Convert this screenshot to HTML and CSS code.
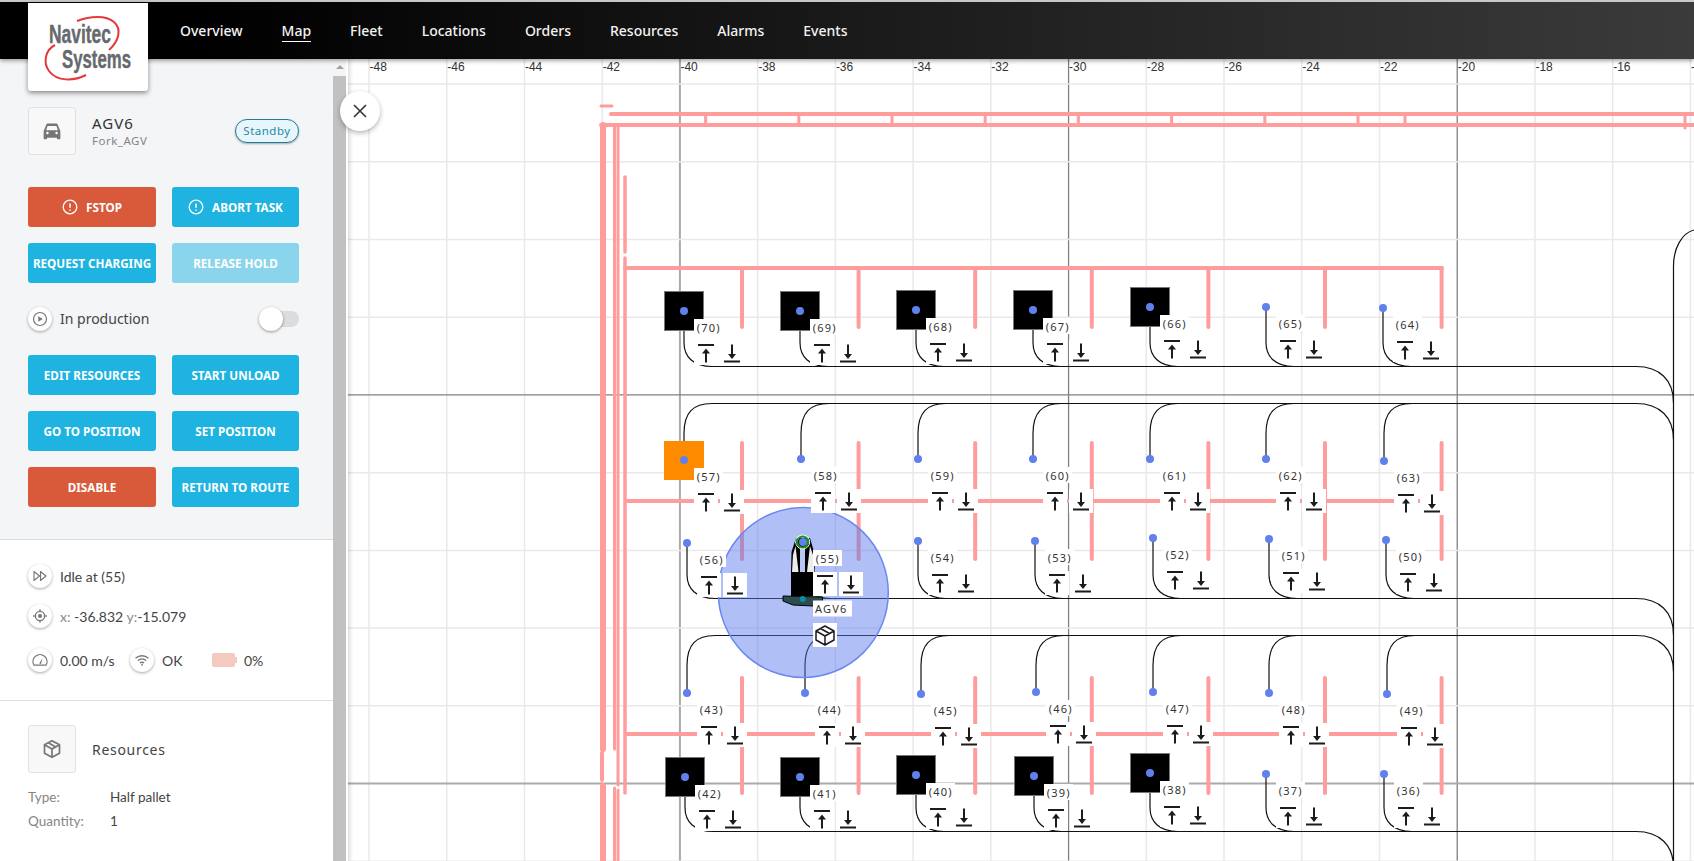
FILE: index.html
```html
<!DOCTYPE html>
<html lang="en">
<head>
  <meta charset="UTF-8" />
  <meta name="viewport" content="width=device-width, initial-scale=1.0" />
  <title>Navitec Systems - Map</title>
  <link rel="stylesheet" href="styles.css">
</head>
<body>
  <header class="topbar">
    <div class="logo">
      <svg width="120" height="88" viewBox="0 0 120 88">
        <path class="logo-swoosh" d="M49 18 C62 13 78 12 86 19 C94 26 91 38 81 47" />
        <path class="logo-swoosh" d="M27 42 C17 47 15 60 21 68 C29 79 46 78 58 72" />
        <text class="logo-text" x="21" y="40" textLength="62" lengthAdjust="spacingAndGlyphs">Navitec</text>
        <text class="logo-text" x="34" y="65" textLength="69" lengthAdjust="spacingAndGlyphs">Systems</text>
      </svg>
    </div>
    <nav class="nav">
      <a>Overview</a>
      <a class="active">Map</a>
      <a>Fleet</a>
      <a>Locations</a>
      <a>Orders</a>
      <a>Resources</a>
      <a>Alarms</a>
      <a>Events</a>
    </nav>
  </header>

  <div class="content">
    <aside class="sidebar">
      <div class="side-body">
        <section class="vehicle">
          <div class="vehicle-head">
            <div class="icon-box">
              <svg width="20" height="20" viewBox="0 0 24 24"><path fill="#757575" fill-rule="evenodd" d="M18.9 4.5C18.6 3.6 17.8 3 16.9 3H7.1c-.9 0-1.7.6-2 1.5L2 12v9c0 .6.4 1 1 1h2c.6 0 1-.4 1-1v-1h12v1c0 .6.4 1 1 1h2c.6 0 1-.4 1-1v-9l-3.100-7.500zM6.500 16c-.8 0-1.500-.7-1.500-1.500S5.700 13 6.500 13s1.500.7 1.500 1.500S7.300 16 6.500 16zm11 0c-.8 0-1.500-.7-1.500-1.500s.7-1.500 1.500-1.500 1.500.7 1.500 1.500-.7 1.500-1.500 1.500zM5 11l1.700-5h10.600l1.700 5H5z"/></svg>
            </div>
            <div class="vehicle-name">
              <div class="name">AGV6</div>
              <div class="type">Fork_AGV</div>
            </div>
            <span class="pill">Standby</span>
          </div>

          <div class="btn-grid">
            <button class="btn red">
              <svg width="16" height="16" viewBox="0 0 16 16"><circle cx="8" cy="8" r="6.800" fill="none" stroke="#fff" stroke-width="1.300"/><path d="M8 4.500v4.300M8 10.500v1.300" stroke="#fff" stroke-width="1.500" fill="none"/></svg>
              FSTOP
            </button>
            <button class="btn">
              <svg width="16" height="16" viewBox="0 0 16 16"><circle cx="8" cy="8" r="6.800" fill="none" stroke="#fff" stroke-width="1.300"/><path d="M8 4.500v4.300M8 10.500v1.300" stroke="#fff" stroke-width="1.500" fill="none"/></svg>
              ABORT TASK
            </button>
            <button class="btn">REQUEST CHARGING</button>
            <button class="btn faded">RELEASE HOLD</button>
          </div>

          <div class="toggle-row">
            <span class="round-icon">
              <svg width="16" height="16" viewBox="0 0 16 16"><circle cx="8" cy="8" r="6.500" fill="none" stroke="#757575" stroke-width="1.200"/><path d="M6.300 5.200l4.500 2.800-4.500 2.800z" fill="#757575"/></svg>
            </span>
            <span class="toggle-label">In production</span>
            <span class="toggle"><span class="thumb"></span></span>
          </div>

          <div class="btn-grid">
            <button class="btn">EDIT RESOURCES</button>
            <button class="btn">START UNLOAD</button>
            <button class="btn">GO TO POSITION</button>
            <button class="btn">SET POSITION</button>
            <button class="btn red">DISABLE</button>
            <button class="btn">RETURN TO ROUTE</button>
          </div>
        </section>

        <section class="status">
          <div class="status-row">
            <span class="round-icon">
              <svg width="16" height="16" viewBox="0 0 16 16"><path d="M2 3.500l5.500 4.500L2 12.500zM8.500 3.500l5.500 4.500-5.500 4.500z" fill="none" stroke="#757575" stroke-width="1.100" stroke-linejoin="round"/></svg>
            </span>
            <span>Idle at (55)</span>
          </div>
          <div class="status-row">
            <span class="round-icon">
              <svg width="16" height="16" viewBox="0 0 16 16"><circle cx="8" cy="8" r="4.600" fill="none" stroke="#757575" stroke-width="1.300"/><circle cx="8" cy="8" r="2" fill="#757575"/><path d="M8 1.200v2.200M8 12.600v2.200M1.200 8h2.200M12.600 8h2.200" stroke="#757575" stroke-width="1.300"/></svg>
            </span>
            <span><span class="muted">x:</span> -36.832 <span class="muted">y:</span>-15.079</span>
          </div>
          <div class="status-row speed-row">
            <span class="round-icon">
              <svg width="16" height="16" viewBox="0 0 16 16"><path d="M2 13.200h12a7 7 0 1 0-12 0z" fill="none" stroke="#757575" stroke-width="1.200" stroke-linejoin="round"/><path d="M7.200 11.500l3.300-5.200-1.500 5.800z" fill="#757575"/></svg>
            </span>
            <span class="speed">0.00 m/s</span>
            <span class="round-icon">
              <svg width="16" height="16" viewBox="0 0 16 16"><path d="M1.500 6.200c3.800-3.300 9.200-3.300 13 0M3.800 8.600c2.500-2.100 5.900-2.100 8.400 0M6 11c1.200-.9 2.800-.9 4 0" fill="none" stroke="#757575" stroke-width="1.300"/><circle cx="8" cy="12.800" r=".9" fill="#757575"/></svg>
            </span>
            <span class="link-ok">OK</span>
            <span class="battery"></span>
            <span>0%</span>
          </div>
        </section>

        <section class="resources">
          <div class="resources-head">
            <div class="icon-box">
              <svg width="20" height="20" viewBox="0 0 24 24"><path d="M12 2l9 5v10l-9 5-9-5V7zM3 7l9 5 9-5M12 12v10M7.500 4.500l9 5" fill="none" stroke="#757575" stroke-width="2" stroke-linejoin="round"/></svg>
            </div>
            <span class="resources-title">Resources</span>
          </div>
          <div class="res-row"><span class="res-key">Type:</span><span>Half pallet</span></div>
          <div class="res-row"><span class="res-key">Quantity:</span><span>1</span></div>
        </section>
      </div>
      <div class="scrollbar"><div class="scroll-thumb"></div></div>
    </aside>

    <main class="map">
      <button class="close-btn" aria-label="Close">
        <svg width="16" height="16" viewBox="0 0 16 16"><path d="M2 2l12 12M14 2L2 14" stroke="#333" stroke-width="1.600" fill="none"/></svg>
      </button>
      <svg id="map-canvas" class="map-canvas" viewBox="348 59 1346 802" xmlns="http://www.w3.org/2000/svg"></svg>
    </main>
  </div>

  <script src="map.js"></script>
</body>
</html>
```

FILE: styles.css
```css
* {
  box-sizing: border-box;
}
body {
  margin: 0;
  height: 100vh;
  overflow: hidden;
  display: flex;
  flex-direction: column;
  font-family: "Noto Sans", Arial, sans-serif;
  color: #333;
  background-color: white;
}

/* Top bar */
.topbar {
  position: relative;
  z-index: 3;
  display: flex;
  height: 59px;
  flex-shrink: 0;
  border-top: 2px solid #c8c8c8;
  background: linear-gradient(to right, #000 12%, #3b3b3b);
  box-shadow: 0 2px 4px rgba(0,0,0,0.35);
}
.logo {
  width: 120px;
  height: 88px;
  margin: 1px 0 0 28px;
  background-color: white;
  border-radius: 0 0 3px 3px;
  box-shadow: 0 2px 5px rgba(0,0,0,0.45);
}
.logo svg {
  display: block;
}
.logo-text {
  font-family: "Liberation Sans", Arial, sans-serif;
  font-weight: bold;
  font-size: 25px;
  fill: #66696d;
  stroke: #66696d;
  stroke-width: 0.4;
}
.logo-swoosh {
  fill: none;
  stroke: #e5383b;
  stroke-width: 2;
}
.nav {
  display: flex;
  gap: 39px;
  margin-left: 32px;
  align-items: center;
  height: 58px;
}
.nav a {
  color: #f2f2f2;
  font-size: 14px;
  line-height: 18px;
  font-weight: 500;
  padding: 1px 0;
  border-bottom: 1px solid transparent;
}
.nav a.active {
  border-bottom-color: white;
}

.content {
  flex: 1;
  display: flex;
  min-height: 0;
}

/* Sidebar */
.sidebar {
  position: relative;
  z-index: 2;
  width: 348px;
  flex-shrink: 0;
  display: flex;
  background-color: white;
  box-shadow: 2px 0 4px rgba(0,0,0,0.15);
}
.side-body {
  width: 333px;
  flex-shrink: 0;
}
.scrollbar {
  width: 13px;
  background-color: #f4f5f7;
  padding-top: 17px;
  position: relative;
}
.scrollbar::before {
  content: "";
  position: absolute;
  top: 6px;
  left: 3px;
  border-left: 4px solid transparent;
  border-right: 4px solid transparent;
  border-bottom: 4px solid #a3a3a3;
}
.scroll-thumb {
  height: 100%;
  background-color: #c1c1c1;
}
.vehicle {
  height: 481px;
  padding: 48px 34px 0 28px;
  background-color: #f4f5f7;
  border-bottom: 1px solid #dcdcdc;
}
.vehicle-head, .resources-head {
  display: flex;
  align-items: center;
}
.vehicle-head {
  margin-bottom: 32px;
}
.icon-box {
  width: 48px;
  height: 48px;
  display: flex;
  align-items: center;
  justify-content: center;
  background-color: #f8f8f8;
  border: 1px solid #e2e2e2;
  border-radius: 3px;
  margin-right: 16px;
}
.vehicle-name {
  flex: 1;
}
.name {
  font-size: 15px;
  line-height: 20px;
  letter-spacing: 1px;
  color: #333;
}
.type {
  font-size: 11.5px;
  line-height: 16px;
  letter-spacing: 0.5px;
  color: #858585;
}
.pill {
  width: 64px;
  height: 24px;
  border: 1px solid #1f7f9f;
  border-radius: 12px;
  background-color: #e7f6fb;
  box-shadow: 0 1px 2px rgba(0,0,0,0.3);
  color: #2a86a8;
  font-size: 11.5px;
  line-height: 22px;
  letter-spacing: 0.5px;
  text-align: center;
}
.btn-grid {
  display: grid;
  grid-template-columns: 128px 127px;
  grid-auto-rows: 40px;
  gap: 16px;
}
.btn {
  display: flex;
  align-items: center;
  justify-content: center;
  gap: 8px;
  padding: 0;
  border: none;
  border-radius: 3px;
  background-color: #1eb3e0;
  color: white;
  font-family: "Noto Sans", Arial, sans-serif;
  font-size: 11.7px;
  font-weight: 700;
  white-space: nowrap;
}
.btn.red {
  background-color: #d85a3a;
}
.btn.faded {
  background-color: #8bd5ec;
}
.round-icon {
  width: 24px;
  height: 24px;
  flex-shrink: 0;
  display: flex;
  align-items: center;
  justify-content: center;
  background-color: white;
  border-radius: 50%;
  box-shadow: 0 1px 3px rgba(0,0,0,0.35);
}
.toggle-row {
  display: flex;
  align-items: center;
  height: 72px;
}
.toggle-label {
  flex: 1;
  margin-left: 8px;
  font-size: 14px;
  line-height: 16px;
  padding-bottom: 1px;
  color: #444;
}
.toggle {
  position: relative;
  width: 37px;
  height: 16px;
  background-color: #dcdcdc;
  border-radius: 8px;
}
.thumb {
  position: absolute;
  left: -3px;
  top: -4px;
  width: 24px;
  height: 24px;
  background-color: white;
  border-radius: 50%;
  box-shadow: 0 1px 3px rgba(0,0,0,0.4);
}
.status {
  height: 161px;
  padding: 24px 0 0 28px;
  border-bottom: 1px solid #dfdfdf;
  font-family: Lato, Arial, sans-serif;
  font-size: 14px;
  color: #444;
}
.status-row {
  display: flex;
  align-items: center;
  gap: 8px;
  height: 24px;
  margin-bottom: 16px;
}
.speed-row {
  margin-top: 20px;
}
.muted {
  color: #8a8a8a;
}
.speed {
  width: 62px;
}
.link-ok {
  width: 42px;
}
.battery {
  position: relative;
  width: 23px;
  height: 14px;
  margin-right: 1px;
  background-color: #f3c9c0;
  border-radius: 2px;
}
.battery::after {
  content: "";
  position: absolute;
  right: -2px;
  top: 4px;
  width: 2px;
  height: 6px;
  background-color: #f3c9c0;
}
.resources {
  padding: 24px 0 0 28px;
  font-family: Lato, Arial, sans-serif;
  font-size: 13.5px;
  color: #444;
}
.resources-head {
  margin-bottom: 12px;
}
.resources-title {
  font-family: "Noto Sans", Arial, sans-serif;
  font-size: 14px;
  letter-spacing: 0.7px;
}
.res-row {
  display: flex;
  height: 24px;
  align-items: center;
}
.res-key {
  width: 82px;
  color: #858585;
}

/* Map */
.map {
  position: relative;
  flex: 1;
  min-width: 0;
  background-color: white;
}
.map-canvas {
  display: block;
  width: 100%;
  height: 100%;
}
.close-btn {
  position: absolute;
  left: -8px;
  top: 32px;
  z-index: 3;
  width: 40px;
  height: 40px;
  padding: 0;
  display: flex;
  align-items: center;
  justify-content: center;
  background-color: white;
  border: none;
  border-radius: 50%;
  box-shadow: 0 2px 5px rgba(0,0,0,0.3);
}
.grid-line {
  stroke: #e9e9e9;
  stroke-width: 1.5;
}
.grid-strong {
  stroke: #aaa;
  stroke-width: 2;
}
.grid-thin {
  stroke: #808080;
  stroke-width: 1.3;
}
.axis-label {
  font-family: "Liberation Sans", Arial, sans-serif;
  font-size: 12px;
  fill: #333;
}
.wall {
  stroke: #ff9c9c;
  fill: none;
  stroke-linecap: round;
}
.route {
  stroke: #111;
  stroke-width: 1.2;
  fill: none;
}
.square {
  fill: #000;
  stroke: #777;
  stroke-width: 1;
}
.square-busy {
  fill: #ff8c00;
  stroke: none;
}
.dot {
  fill: #6080ee;
}
.st-box {
  fill: white;
}
.st-label {
  font-family: "Noto Sans", Arial, sans-serif;
  font-size: 11px;
  letter-spacing: 1.2px;
  fill: #333;
}
.st-icon {
  stroke: #1c1c1c;
  stroke-width: 2;
  fill: none;
}
.st-head {
  fill: #1c1c1c;
}
.range {
  fill: rgba(90,120,238,0.47);
  stroke: #6c88ee;
  stroke-width: 1.5;
}
.pkg {
  fill: none;
  stroke: #1c1c1c;
  stroke-width: 1.5;
  stroke-linejoin: round;
}
```

FILE: map.js
```js
const NS = 'http://www.w3.org/2000/svg';
const canvas = document.getElementById('map-canvas');

function add(tag, attrs, text) {
  const el = document.createElementNS(NS, tag);
  for (const key in attrs) el.setAttribute(key, attrs[key]);
  if (text !== undefined) el.textContent = text;
  canvas.appendChild(el);
  return el;
}

// grid: 2 map units are 77.73px
const STEP = 77.73;
for (let i = 0; i < 18; i++) {
  const x = 369 + i * STEP;
  const value = -48 + i * 2;
  let cls = 'grid-line';
  if (value === -40) cls = 'grid-strong';
  if (value === -30 || value === -20) cls = 'grid-thin';
  add('line', { x1: x, y1: 59, x2: x, y2: 861, class: cls });
}
for (let i = 0; i < 11; i++) {
  const y = 84 + i * STEP;
  let cls = 'grid-line';
  if (i === 4) cls = 'grid-thin';
  if (i === 9) cls = 'grid-strong';
  add('line', { x1: 348, y1: y, x2: 1694, y2: y, class: cls });
}
for (let i = 0; i < 18; i++) {
  add('text', { x: 369.5 + i * STEP, y: 71, class: 'axis-label' }, String(-48 + i * 2));
}

// walls: x1, y1, x2, y2, width
const walls = [
  [601, 106, 612, 106, 3],
  [611, 114, 1694, 114, 4],
  [601, 125, 1694, 125, 4],
  [603, 125, 603, 749, 6],
  [602, 753, 602, 780, 4],
  [603, 786, 603, 861, 6],
  [614.5, 125, 614.5, 749, 3],
  [614.5, 788, 614.5, 861, 3],
  [618, 125, 618, 785, 3],
  [618, 790, 618, 861, 3],
  [625, 177, 625, 252, 3.5],
  [625, 258, 625, 793, 3.5],
  [625, 268, 1442, 268, 4],
  [627, 501, 1421, 501, 4],
  [627, 734, 1424, 734, 4],
  [1405, 114, 1405, 125, 3],
  [1685, 114, 1685, 128, 3]
];
for (let i = 0; i < 8; i++) {
  const x = 705.6 + i * 93.2;
  walls.push([x, 114, x, 125, 3]);
}
for (let i = 0; i < 7; i++) {
  const x = 742 + i * 116.6;
  walls.push([x, 268, x, 327, 4]);
  walls.push([x, 443, x, 559, 4]);
  walls.push([x, 678, x, 793, 4]);
}
walls.forEach(w => {
  add('line', { x1: w[0], y1: w[1], x2: w[2], y2: w[3], class: 'wall', 'stroke-width': w[4] });
});

// stations by row: number, x, y
const rows = [
  { line: 366.5, up: false, squares: 5, stations: [[70, 684, 311], [69, 800, 311], [68, 916, 310], [67, 1033, 310], [66, 1150, 307], [65, 1266, 307], [64, 1383, 308]] },
  { line: 403.5, up: true, squares: 0, stations: [[57, 684, 460], [58, 801, 459], [59, 918, 459], [60, 1033, 459], [61, 1150, 459], [62, 1266, 459], [63, 1384, 461]] },
  { line: 598.5, up: false, squares: 0, stations: [[56, 687, 543], [55, 803, 542], [54, 918, 541], [53, 1035, 541], [52, 1153, 538], [51, 1269, 539], [50, 1386, 540]] },
  { line: 635.5, up: true, squares: 0, stations: [[43, 687, 693], [44, 805, 693], [45, 921, 694], [46, 1036, 692], [47, 1153, 692], [48, 1269, 693], [49, 1387, 694]] },
  { line: 831.5, up: false, squares: 5, stations: [[42, 685, 777], [41, 800, 777], [40, 916, 775], [39, 1034, 776], [38, 1150, 773], [37, 1266, 774], [36, 1384, 774]] }
];

// routes
add('path', { class: 'route', d: 'M1694 230 C1682 233 1673.5 248 1673.5 266 V861' });
rows.forEach(row => {
  const first = row.stations[0][1];
  add('path', { class: 'route', d: `M${first + 28} ${row.line} H1636 C1660 ${row.line} 1673.5 ${row.line + 14} 1673.5 ${row.line + 36}` });
  row.stations.forEach(s => {
    const x = s[1], y = s[2];
    const d = row.up
      ? `M${x} ${y} V${row.line + 30} C${x} ${row.line + 9} ${x + 9} ${row.line} ${x + 28} ${row.line}`
      : `M${x} ${y} V${row.line - 24} C${x} ${row.line - 10} ${x + 9} ${row.line} ${x + 28} ${row.line}`;
    add('path', { class: 'route', d: d });
  });
});

// occupied positions
rows.forEach(row => {
  row.stations.slice(0, row.squares).forEach(s => {
    add('rect', { class: 'square', x: s[1] - 19.5, y: s[2] - 19.5, width: 39, height: 39 });
  });
});
add('rect', { class: 'square-busy', x: 664, y: 441, width: 40, height: 39 });

// vehicle
add('circle', { class: 'range', cx: 803.3, cy: 592.5, r: 85 });
add('polygon', { points: '796,538 810,538 814,552 815,572 791,572 791.5,552', fill: '#000' });
add('polygon', { points: '792,572 793,555 795.5,546 798.5,572', fill: '#ececec' });
add('polygon', { points: '807,572 810,546 813,555 814.5,572', fill: '#ececec' });
add('rect', { x: 800, y: 548, width: 5, height: 24, fill: '#b8c6f4' });
add('rect', { x: 791, y: 572, width: 22.5, height: 24, fill: '#000' });
add('polygon', { points: '783,596 822.5,597 822.5,601 813,606 793,605 783,601', fill: '#2c4c4e', stroke: '#000', 'stroke-width': 1 });
add('circle', { cx: 802.7, cy: 599, r: 3, fill: '#0a8ea0' });
add('circle', { cx: 802.7, cy: 542, r: 7, fill: 'none', stroke: 'white', 'stroke-width': 1 });
add('circle', { cx: 802.7, cy: 542, r: 5.5, fill: 'none', stroke: '#1a9a1a', 'stroke-width': 2 });

// station labels, load and unload icons, dots
function uploadIcon(x, y) {
  add('path', { class: 'st-icon', d: `M${x - 8} ${y + 34}H${x + 8}M${x} ${y + 41}V${y + 51.5}` });
  add('path', { class: 'st-head', d: `M${x} ${y + 37.5}l4 5h-8z` });
}
function downloadIcon(x, y) {
  add('path', { class: 'st-icon', d: `M${x - 8} ${y + 50.5}H${x + 8}M${x} ${y + 33.5}V${y + 44}` });
  add('path', { class: 'st-head', d: `M${x} ${y + 48}l4 -5h-8z` });
}
rows.forEach(row => {
  row.stations.forEach(s => {
    const x = s[1], y = s[2];
    add('rect', { class: 'st-box', x: x + 10, y: y + 8, width: 29, height: 16 });
    add('rect', { class: 'st-box', x: x + 10, y: y + 30, width: 24, height: 24 });
    add('rect', { class: 'st-box', x: x + 36, y: y + 30, width: 24, height: 24 });
    add('text', { class: 'st-label', x: x + 12.7, y: y + 20.5 }, `(${s[0]})`);
    uploadIcon(x + 22, y);
    downloadIcon(x + 48, y);
  });
});
rows.forEach(row => {
  row.stations.forEach(s => {
    add('circle', { class: 'dot', cx: s[1], cy: s[2], r: 4 });
  });
});

// vehicle tag and load box
add('rect', { class: 'st-box', x: 813, y: 600.5, width: 39, height: 16 });
add('text', { class: 'st-label', x: 815, y: 613 }, 'AGV6');
add('rect', { class: 'st-box', x: 813, y: 623, width: 24, height: 24 });
add('path', { class: 'pkg', d: 'M825 626 L834 631 V640 L825 645 L816 640 V631 Z M816 631 L825 636 L834 631 M825 636 V645 M820.5 628.5 L829.5 633.5' });
```
